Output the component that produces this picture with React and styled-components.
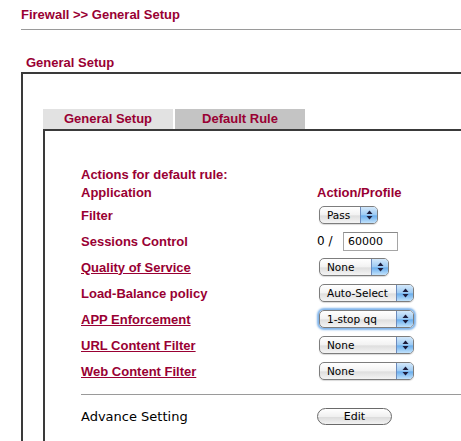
import React from 'react'
import styled, {createGlobalStyle, css} from 'styled-components'

const GlobalStyle = createGlobalStyle`
  body {
    margin: 0;
    overflow: hidden;
    background: #fff;
    font-family: "Liberation Sans", Arial, sans-serif;
  }
`

const maroon = '#990033'

const Page = styled.div`
  box-sizing: border-box;
  padding-left: 21px;
  width: 461px;
  height: 441px;
  display: flex;
  flex-direction: column;
`

const Title = styled.div`
  padding: 7px 0 6px;
  line-height: 16px;
  font-size: 13px;
  font-weight: bold;
  color: ${maroon};
  border-bottom: 1px solid #9a9a9a;
`

const SectionHeading = styled.div`
  margin-top: 23px;
  padding: 2px 0 0 5px;
  line-height: 16px;
  height: 17px;
  font-size: 13px;
  font-weight: bold;
  color: ${maroon};
`

const OuterBox = styled.div`
  flex: 1;
  display: flex;
  flex-direction: column;
  border-top: 2px solid #3a3a3a;
  border-left: 2px solid #3a3a3a;
  padding: 35px 0 0 20px;
`

const Tabs = styled.div`
  display: flex;
  gap: 2px;
`

const Tab = styled.div`
  width: 130px;
  height: 20px;
  line-height: 20px;
  text-align: center;
  font-size: 13px;
  font-weight: bold;
  color: ${maroon};
  background: ${(p) => (p.$active ? '#c4c4c4' : '#e2e2e2')};
`

const InnerBox = styled.div`
  flex: 1;
  border-top: 2px solid #3a3a3a;
  border-left: 2px solid #3a3a3a;
  padding: 34px 0 0 36px;
`

const Grid = styled.div`
  display: grid;
  grid-template-columns: 236px 1fr;
  grid-template-rows: 18px 19px repeat(7, 26px);
  align-items: center;
  font-size: 13px;
  font-weight: bold;
  color: ${maroon};
`

const Head = styled.div`
  grid-column: ${(p) => (p.$wide ? '1 / 3' : 'auto')};
`

const Label = styled.div`
  ${(p) =>
    p.$link &&
    css`
      text-decoration: underline;
    `}
`

const Cell = styled.div`
  display: flex;
  align-items: center;
  font-family: "DejaVu Sans", Verdana, sans-serif;
  font-weight: normal;
  color: #000;
  font-size: 12px;
`

const Slash = styled.span`
  width: 26px;
`

const TextInput = styled.div`
  box-sizing: border-box;
  width: 55px;
  height: 19px;
  border: 1px solid #a5a5a5;
  border-top-color: #8a8a8a;
  padding: 2px 0 0 4px;
  font-size: 11px;
  line-height: 14px;
`

const SelectBox = styled.div`
  box-sizing: border-box;
  margin-left: 2px;
  width: ${(p) => p.$w}px;
  height: 18px;
  display: flex;
  border: 1px solid #7d7d7d;
  border-radius: 5px;
  overflow: hidden;
  background: linear-gradient(#ffffff, #f2f2f2 50%, #dedede 55%, #f4f4f4);
  box-shadow: ${(p) => (p.$focus ? '0 0 2px 2px #7eb3ea' : '0 1px 1px rgba(0,0,0,0.15)')};
  font-size: 10.5px;
`

const SelectText = styled.span`
  flex: 1;
  padding-left: 7px;
  line-height: 16px;
`

const ArrowPart = styled.span`
  width: 16px;
  display: flex;
  align-items: center;
  justify-content: center;
  border-left: 1px solid #6c8bbd;
  background: linear-gradient(#d3e8fb, #9ccaf3 50%, #6aaeed 55%, #c2e2fb);
`

const Rule = styled.div`
  height: 1px;
  background: #9a9a9a;
  margin-top: 10px;
`

const Footer = styled.div`
  display: grid;
  grid-template-columns: 236px 1fr;
  align-items: center;
  height: 24px;
  margin-top: 9px;
`

const FooterLabel = styled.div`
  font-family: "DejaVu Sans", Verdana, sans-serif;
  font-size: 13px;
  color: #000;
`

const EditButton = styled.div`
  box-sizing: border-box;
  width: 75px;
  height: 17px;
  border: 1px solid #6a6a6a;
  border-radius: 9px;
  background: linear-gradient(#ffffff, #f0f0f0 50%, #dcdcdc 55%, #f2f2f2);
  text-align: center;
  line-height: 15px;
  font-family: "DejaVu Sans", Verdana, sans-serif;
  font-size: 11px;
  color: #000;
`

const Arrows = () => (
  <svg width="7" height="10" viewBox="0 0 7 10">
    <path d="M3.5 0.5 L6.5 4 L0.5 4 Z" fill="#1c1c3c" />
    <path d="M3.5 9.5 L6.5 6 L0.5 6 Z" fill="#1c1c3c" />
  </svg>
)

const Select = ({w, focus, children}) => (
  <SelectBox $w={w} $focus={focus}>
    <SelectText>{children}</SelectText>
    <ArrowPart>
      <Arrows />
    </ArrowPart>
  </SelectBox>
)

const rows = [
  {label: 'Filter', control: <Select w={59}>Pass</Select>},
  {
    label: 'Sessions Control',
    control: (
      <>
        <Slash>0 /</Slash>
        <TextInput>60000</TextInput>
      </>
    ),
  },
  {label: 'Quality of Service', link: true, control: <Select w={70}>None</Select>},
  {label: 'Load-Balance policy', control: <Select w={95}>Auto-Select</Select>},
  {label: 'APP Enforcement', link: true, control: <Select w={95} focus>1-stop qq</Select>},
  {label: 'URL Content Filter', link: true, control: <Select w={95}>None</Select>},
  {label: 'Web Content Filter', link: true, control: <Select w={95}>None</Select>},
]

export default function App() {
  return (
    <Page>
      <GlobalStyle />
      <Title>Firewall &gt;&gt; General Setup</Title>
      <SectionHeading>General Setup</SectionHeading>
      <OuterBox>
        <Tabs>
          <Tab>General Setup</Tab>
          <Tab $active>Default Rule</Tab>
        </Tabs>
        <InnerBox>
          <Grid>
            <Head $wide>Actions for default rule:</Head>
            <Head>Application</Head>
            <Head>Action/Profile</Head>
            {rows.map((r) => (
              <React.Fragment key={r.label}>
                <Label $link={r.link}>{r.label}</Label>
                <Cell>{r.control}</Cell>
              </React.Fragment>
            ))}
          </Grid>
          <Rule />
          <Footer>
            <FooterLabel>Advance Setting</FooterLabel>
            <EditButton>Edit</EditButton>
          </Footer>
        </InnerBox>
      </OuterBox>
    </Page>
  )
}
